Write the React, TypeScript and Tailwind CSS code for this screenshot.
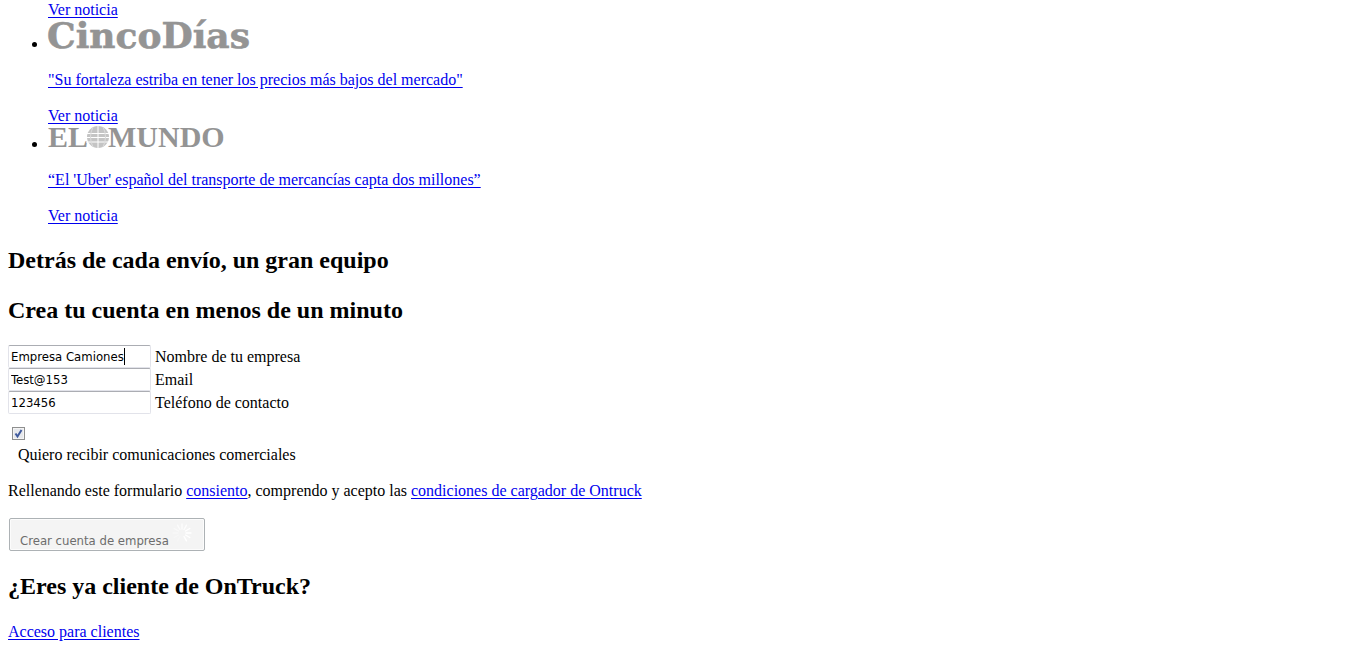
import { useState } from "react";
import type { ReactNode } from "react";

const linkClass = "text-[#0000ee] underline underline-offset-2";
const fieldClass =
  "h-[23px] w-[143px] rounded-xs border border-[#e2e3ea] border-t-[#abadb3] bg-white px-0.5 font-['DejaVu_Sans_Condensed','DejaVu_Sans',sans-serif] text-[13px] text-black caret-transparent outline-none";

function CincoDiasLogo() {
  return (
    <svg className="inline-block h-[30px] w-[202px] overflow-visible align-baseline" viewBox="0 0 202 30" role="img" aria-label="Cinco Días">
      <text x="-1" y="29" fill="#949494" stroke="#949494" strokeWidth="0.6" fontFamily="'DejaVu Serif', serif" fontWeight="700" fontSize="36">
        CincoDías
      </text>
    </svg>
  );
}

function ElMundoLogo() {
  return (
    <svg className="inline-block h-6 w-[176px] overflow-visible align-baseline" viewBox="0 0 176 24" role="img" aria-label="El Mundo">
      <g fill="#949494" fontFamily="'Liberation Serif', serif" fontWeight="700" fontSize="30">
        <text x="0" y="22">EL</text>
        <text x="60" y="22">MUNDO</text>
      </g>
      <circle cx="50" cy="12" r="11" fill="#c4c4c4" />
      <path d="M38 8.5h24M38 12.5h24M38 17h24M50 1v22" stroke="#fff" strokeWidth="1" fill="none" />
      <path d="M45 2Q40 12 45 22M55 2Q60 12 55 22" stroke="#dcdcdc" strokeWidth="1" fill="none" />
    </svg>
  );
}

function Spinner() {
  return (
    <svg className="mr-1 h-5 w-5" viewBox="0 0 20 20" aria-hidden="true">
      <g stroke="#fff" strokeWidth="1.4" strokeLinecap="round">
        <path d="M10 1v5" opacity=".8" />
        <path d="M14.5 2.2L12 6.5" opacity=".9" />
        <path d="M17.8 5.5L13.5 8" />
        <path d="M19 10h-5" />
        <path d="M17.8 14.5L13.5 12" />
        <path d="M14.5 17.8L12 13.5" />
        <path d="M10 19v-5" opacity=".1" />
        <path d="M5.5 17.8L8 13.5" opacity=".2" />
        <path d="M2.2 14.5L6.5 12" opacity=".3" />
        <path d="M1 10h5" opacity=".4" />
        <path d="M2.2 5.5L6.5 8" opacity=".5" />
        <path d="M5.5 2.2L8 6.5" opacity=".7" />
      </g>
    </svg>
  );
}

function NewsItem({ logo, quote }: { logo: ReactNode; quote: string }) {
  return (
    <li>
      {logo}
      <p className="my-[18px]">
        <a href="#noticia" className={linkClass}>{quote}</a>
      </p>
      <a href="#noticia" className={linkClass}>Ver noticia</a>
    </li>
  );
}

function Field({ id, label, type, initial, focus }: { id: string; label: string; type: string; initial: string; focus?: boolean }) {
  const [value, setValue] = useState(initial);
  return (
    <div className="relative flex items-center gap-1">
      <input
        id={id}
        type={type}
        value={value}
        onChange={(e) => setValue(e.target.value)}
        className={fieldClass}
      />
      {focus && <span className="pointer-events-none absolute top-[3px] left-[116px] h-[17px] w-px bg-black" />}
      <label htmlFor={id}>{label}</label>
    </div>
  );
}

export default function App() {
  const [news, setNews] = useState(true);
  return (
    <main className="bg-white px-2 pt-px pb-4 font-['Liberation_Serif',serif] text-base leading-[18px] text-black">
      <ul className="list-disc pl-10">
        <li className="list-none">
          <a href="#noticia" className={linkClass}>Ver noticia</a>
        </li>
        <NewsItem logo={<CincoDiasLogo />} quote={'"Su fortaleza estriba en tener los precios más bajos del mercado"'} />
        <NewsItem logo={<ElMundoLogo />} quote="“El 'Uber' español del transporte de mercancías capta dos millones”" />
      </ul>

      <h2 className="mt-[21px] text-2xl leading-7 font-bold">Detrás de cada envío, un gran equipo</h2>
      <h2 className="mt-[22px] text-2xl leading-7 font-bold">Crea tu cuenta en menos de un minuto</h2>

      <form className="mt-[21px]" onSubmit={(e) => e.preventDefault()}>
        <Field id="empresa" label="Nombre de tu empresa" type="text" initial="Empresa Camiones" focus />
        <Field id="email" label="Email" type="text" initial="Test@153" />
        <Field id="telefono" label="Teléfono de contacto" type="tel" initial="123456" />

        <div className="mt-[13px] ml-1 grid h-[13px] w-[13px]">
          <input
            id="comunicaciones"
            type="checkbox"
            checked={news}
            onChange={(e) => setNews(e.target.checked)}
            className="peer col-start-1 row-start-1 h-[13px] w-[13px] appearance-none border border-[#8e8f8f] bg-[#e6e8ec] shadow-[inset_0_0_0_1px_#f4f4f4]"
          />
          <svg className="pointer-events-none invisible col-start-1 row-start-1 h-[13px] w-[13px] peer-checked:visible" viewBox="0 0 13 13" aria-hidden="true">
            <path d="M3.5 6.5L5.5 9.5L9.5 3" fill="none" stroke="#3f5a9d" strokeWidth="2" />
          </svg>
        </div>
        <label htmlFor="comunicaciones" className="mt-1.5 ml-2.5 block">Quiero recibir comunicaciones comerciales</label>

        <p className="mt-[18px]">
          Rellenando este formulario <a href="#consiento" className={linkClass}>consiento</a>, comprendo y acepto las{" "}
          <a href="#condiciones" className={linkClass}>condiciones de cargador de Ontruck</a>
        </p>

        <button
          type="submit"
          disabled
          className="mt-[18px] ml-px flex h-[33px] w-[196px] items-start justify-between rounded-xs border border-[#adb2b5] bg-[#f4f4f4] pt-1 pr-2 pl-2.5 font-['DejaVu_Sans_Condensed','DejaVu_Sans',sans-serif] text-[13px] leading-4 whitespace-nowrap text-[#6d6d6d] shadow-[inset_0_0_0_1px_#fcfcfc]"
        >
          <span className="pt-2.5">Crear cuenta de empresa</span>
          <Spinner />
        </button>
      </form>

      <h2 className="mt-[21px] text-2xl leading-7 font-bold">¿Eres ya cliente de OnTruck?</h2>
      <a href="#acceso" className={`${linkClass} mt-[23px] inline-block`}>Acceso para clientes</a>
    </main>
  );
}
